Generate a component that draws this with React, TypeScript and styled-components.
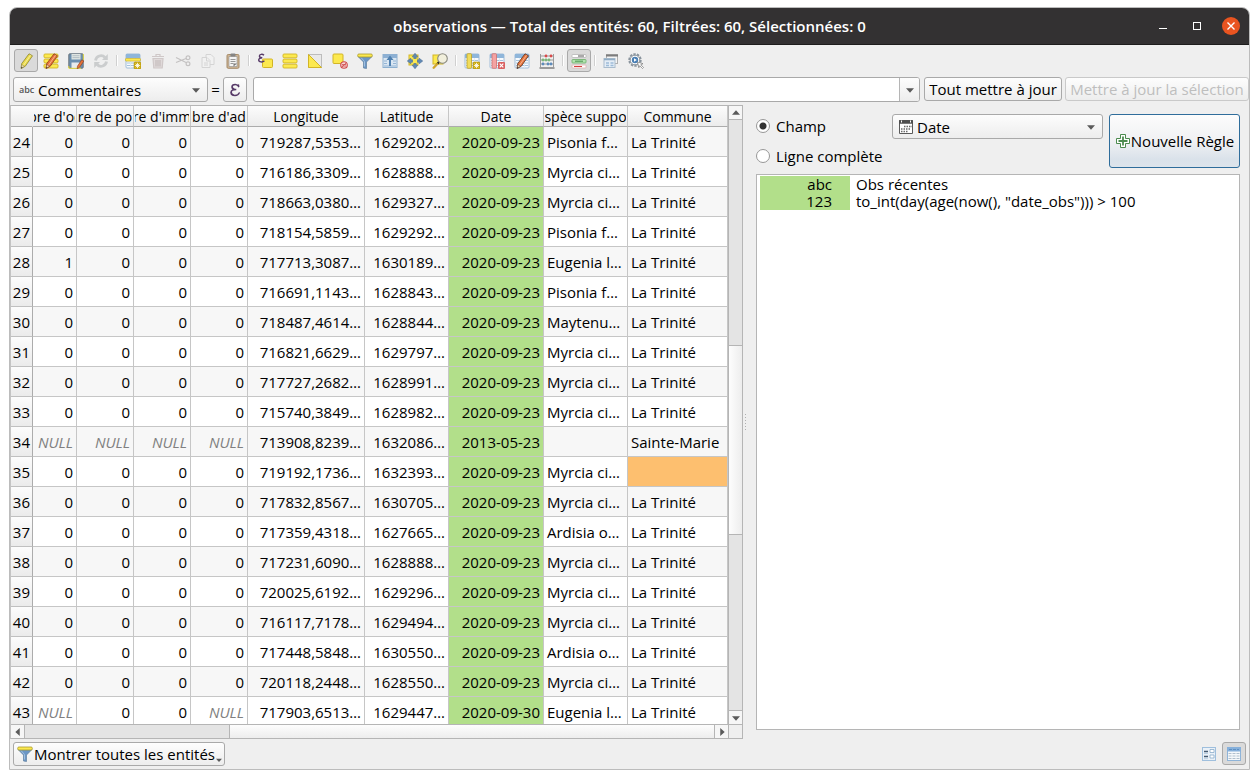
import React from "react";
import styled, { createGlobalStyle, css } from "styled-components";

const GlobalStyle = createGlobalStyle`
  *, *::before, *::after { box-sizing: border-box; }
  body {
    margin: 0;
    background: #fff;
    color: #000;
    font-family: "Open Sans", "Noto Sans", sans-serif;
    font-size: 15px;
    line-height: 20px;
  }
  button, input, select { font: inherit; color: inherit; margin: 0; }
`;

const raised = css`
  border: 1px solid #a9a9a9;
  border-radius: 3px;
  background: linear-gradient(#fdfdfd, #ededed);
`;

const Page = styled.div`
  height: 100vh;
  padding: 7px 9px 9px;
`;

const Window = styled.div`
  display: flex;
  flex-direction: column;
  height: 100%;
  border: 1px solid #bcbcbc;
  border-radius: 8px 8px 0 0;
  background: #efefef;
  overflow: hidden;
`;

const TitleBar = styled.header`
  display: grid;
  grid-template-columns: 96px minmax(0, 1fr) 96px;
  align-items: center;
  flex: none;
  height: 37px;
  background: #333132;
  border-bottom: 1px solid #1e1d1d;
  color: #fff;
`;

const Title = styled.h1`
  grid-column: 2;
  margin: 0;
  font-size: 15px;
  font-weight: 600;
  text-align: center;
  white-space: nowrap;
`;

const WindowButtons = styled.div`
  display: flex;
  align-items: center;
  justify-content: flex-end;
  gap: 16px;
  padding-right: 9px;
`;

const WindowButton = styled.button<{ $close?: boolean }>`
  display: flex;
  align-items: center;
  justify-content: center;
  flex: none;
  width: 18px;
  height: 18px;
  padding: 0;
  border: 0;
  border-radius: 50%;
  background: ${(p) => (p.$close ? "#e95420" : "transparent")};
`;

const Toolbar = styled.div`
  display: flex;
  gap: 1px;
  flex: none;
  padding: 4px 4px 5px;
`;

const ToolButton = styled.button<{ $pressed?: boolean }>`
  display: flex;
  align-items: center;
  justify-content: center;
  width: 24px;
  height: 23px;
  padding: 0;
  border: 1px solid ${(p) => (p.$pressed ? "#a9a9a9" : "transparent")};
  border-radius: 3px;
  background: ${(p) => (p.$pressed ? "#dadada" : "transparent")};
  svg { display: block; }
`;

const Separator = styled.span`
  width: 6px;
  margin: 6px 0;
  background: linear-gradient(#d0d0d0, #d0d0d0) 2px 0 / 1px 100% no-repeat,
    linear-gradient(#fff, #fff) 3px 0 / 1px 100% no-repeat;
`;

const FieldBar = styled.form`
  display: flex;
  align-items: flex-start;
  flex: none;
  padding: 0 0 3px 3px;
`;

const Equals = styled.span`
  width: 15px;
  line-height: 25px;
  text-align: center;
`;

const PushButton = styled.button<{ $width?: number }>`
  ${raised}
  height: 24px;
  min-width: ${(p) => p.$width ?? 24}px;
  padding: 0 2px;
  line-height: 20px;
  white-space: nowrap;
  & + & { margin-left: 3px; }
  &:disabled { color: #bebebe; border-color: #c9c9c9; }
`;

const ExpressionButton = styled.button`
  ${raised}
  display: flex;
  align-items: center;
  justify-content: center;
  width: 24px;
  height: 25px;
  margin-right: 6px;
  padding: 0;
`;

const SelectBox = styled.div<{ $width: number }>`
  ${raised}
  display: grid;
  grid-template-columns: 24px minmax(0, 1fr) 22px;
  align-items: center;
  width: ${(p) => p.$width}px;
  height: 25px;
  > * { grid-row: 1; }
`;

const SelectIcon = styled.span`
  display: flex;
  grid-column: 1;
  padding-left: 5px;
  pointer-events: none;
`;

const SelectArrow = styled.span`
  display: flex;
  justify-content: center;
  grid-column: 3;
  pointer-events: none;
`;

const TypeTag = styled.span`
  grid-column: 1;
  padding-left: 5px;
  color: #555;
  font-size: 9px;
  font-weight: 600;
  line-height: 20px;
`;

const Select = styled.select`
  grid-column: 1 / -1;
  width: 100%;
  height: 23px;
  padding: 0 22px 0 24px;
  border: 0;
  background: transparent;
  appearance: none;
  outline: 0;
`;

const ValueBox = styled.div`
  display: flex;
  flex: 1;
  height: 25px;
  margin-right: 4px;
  border: 1px solid #a9a9a9;
  border-radius: 3px;
  background: #fff;
  overflow: hidden;
`;

const ValueInput = styled.input`
  flex: 1;
  min-width: 0;
  border: 0;
  padding: 0 4px;
  background: transparent;
  outline: 0;
`;

const DropButton = styled.button`
  display: flex;
  align-items: center;
  justify-content: center;
  width: 20px;
  padding: 0;
  border: 0;
  border-left: 1px solid #b5b5b5;
  background: linear-gradient(#fdfdfd, #ededed);
`;

const Main = styled.main`
  display: grid;
  grid-template-columns: minmax(0, 733fr) 13px minmax(0, 493fr);
  flex: 1;
  min-height: 0;
`;

const TableFrame = styled.section`
  display: grid;
  grid-template-columns: minmax(0, 1fr) 14px;
  grid-template-rows: minmax(0, 1fr) 14px;
  border: 1px solid #b5b5b5;
  border-left-color: #c4c4c4;
  min-height: 0;
`;

const TableView = styled.div`
  overflow: hidden;
  background: #fff;
`;

const Table = styled.table`
  width: 100%;
  table-layout: fixed;
  border-collapse: separate;
  border-spacing: 0;
`;

const HeadCell = styled.th<{ $corner?: boolean }>`
  height: 21px;
  padding: 0 1px;
  border-right: 1px solid ${(p) => (p.$corner ? "transparent" : "#c6c6c6")};
  border-bottom: 1px solid #acacac;
  background: linear-gradient(#fcfcfc, #ebebeb) border-box;
  font-size: 14px;
  font-weight: 400;
  line-height: 22px;
`;

const HeadLabel = styled.span`
  display: flex;
  justify-content: center;
  height: 20px;
  overflow: hidden;
  white-space: nowrap;
`;

const RowHead = styled.th`
  height: 30px;
  padding: 1px 2px 0 0;
  border-right: 1px solid #acacac;
  border-bottom: 1px solid #c0c0c0;
  background: linear-gradient(#fcfcfc, #ebebeb);
  font-weight: 400;
  text-align: right;
`;

const Cell = styled.td<{ $left?: boolean; $fill?: string; $null?: boolean }>`
  height: 30px;
  padding: 0 3px;
  border-right: 1px solid #c6c6c6;
  border-bottom: 1px solid #c6c6c6;
  overflow: hidden;
  text-align: ${(p) => (p.$left ? "left" : "right")};
  white-space: nowrap;
  font-style: ${(p) => (p.$null ? "italic" : "normal")};
  color: ${(p) => (p.$null ? "#808080" : "#000")};
  background: ${(p) => p.$fill ?? "transparent"};
`;

const Row = styled.tr`
  background: #fff;
  &:nth-child(odd) { background: #f7f7f7; }
`;

const ScrollBar = styled.div<{ $vertical?: boolean }>`
  display: flex;
  flex-direction: ${(p) => (p.$vertical ? "column" : "row")};
  ${(p) => (p.$vertical ? "border-left" : "border-top")}: 1px solid #b5b5b5;
  background: #e4e4e4;
`;

const ScrollArrow = styled.button<{ $edge: "top" | "right" | "bottom" | "left" }>`
  display: flex;
  align-items: center;
  justify-content: center;
  flex: 0 0 14px;
  padding: 0;
  border: 0;
  border-${(p) => p.$edge}: 1px solid #b5b5b5;
  background: #f6f6f6;
`;

const Groove = styled.span<{ $grow: number }>`
  flex: ${(p) => p.$grow} 1 0;
`;

const Thumb = styled.span<{ $grow: number; $vertical?: boolean }>`
  flex: ${(p) => p.$grow} 1 0;
  ${(p) =>
    p.$vertical
      ? "border-top: 1px solid #b5b5b5; border-bottom: 1px solid #b5b5b5; background: linear-gradient(90deg, #fdfdfd, #ededed);"
      : "border-left: 1px solid #b5b5b5; background: linear-gradient(#fdfdfd, #ededed);"}
`;

const ScrollCorner = styled.span`
  border-top: 1px solid #b5b5b5;
  border-left: 1px solid #b5b5b5;
  background: #efefef;
`;

const Splitter = styled.div`
  display: flex;
  align-items: center;
  padding-left: 2px;
`;

const RulePanel = styled.aside`
  display: flex;
  flex-direction: column;
  gap: 6px;
  padding: 9px 9px 9px 0;
  min-height: 0;
`;

const RuleControls = styled.div`
  display: flex;
  align-items: flex-start;
  gap: 6px;
`;

const RadioGroup = styled.div`
  display: flex;
  flex-direction: column;
  gap: 6px;
  flex: 1;
`;

const RadioLabel = styled.label`
  display: flex;
  align-items: center;
  gap: 6px;
  height: 24px;
  white-space: nowrap;
`;

const Radio = styled.input`
  appearance: none;
  width: 14px;
  height: 14px;
  border: 1px solid #979797;
  border-radius: 50%;
  background: #fff;
  &:checked { background: radial-gradient(circle, #333 3px, #fff 4px); }
`;

const NewRule = styled.button`
  display: flex;
  align-items: center;
  justify-content: center;
  width: 131px;
  height: 54px;
  padding: 0;
  border: 1px solid #2f6d9b;
  border-radius: 3px;
  background: linear-gradient(#fcfcfc 0%, #f0f1f3 50%, #dae2ea 85%, #dde4eb);
  white-space: nowrap;
`;

const RuleList = styled.ul`
  flex: 1;
  margin: 0;
  padding: 1px 3px;
  border: 1px solid #b5b5b5;
  background: #fff;
  list-style: none;
`;

const Rule = styled.li`
  display: flex;
  gap: 6px;
  line-height: 17px;
`;

const RulePreview = styled.span`
  width: 90px;
  padding-right: 18px;
  background: #b2df8a;
  text-align: right;
  white-space: pre-line;
`;

const RuleText = styled.span`
  white-space: pre-line;
`;

const Footer = styled.footer`
  display: flex;
  align-items: flex-start;
  gap: 1px;
  flex: none;
  height: 30px;
  padding: 3px 3px 0;
`;

const FilterButton = styled.button`
  ${raised}
  display: flex;
  align-items: center;
  gap: 1px;
  min-width: 212px;
  height: 24px;
  margin-right: auto;
  padding: 0 2px 0 3px;
  white-space: nowrap;
`;

const MenuMark = styled.span`
  display: flex;
  align-items: flex-end;
  height: 18px;
  margin-left: auto;
`;

/* ---------- drawings ---------- */

const Icon = ({ children, size = 16 }: { children: React.ReactNode; size?: number }) => (
  <svg width={size} height={size} viewBox="0 0 16 16" fill="none" aria-hidden="true">
    {children}
  </svg>
);

const ARROWS = {
  down: "M0 2.500h9L4.500 7.500z",
  up: "M0 6.500h9L4.500 1.500z",
  left: "M6.500 0v9L1.500 4.500z",
  right: "M2.500 0v9L7.500 4.500z",
};

const Arrow = ({ dir = "down", size = 8 }: { dir?: keyof typeof ARROWS; size?: number }) => (
  <svg width={size} height={size} viewBox="0 0 9 9" aria-hidden="true">
    <path d={ARROWS[dir]} fill="#5a5a5a" />
  </svg>
);

const Pencil = ({ body, edge }: { body: string; edge: string }) => (
  <g>
    <path d="M11 .8l3.500 2L7.300 13.200 3.200 15.500l.4-4.700z" fill={body} stroke={edge} strokeWidth=".8" />
    <path d="M12.600 2.200L5.200 12.700" stroke="#fff" strokeOpacity=".5" strokeWidth=".9" />
    <path d="M3.600 11.400l2.900 1.900-3.300 2.200z" fill="#ead9b5" stroke={edge} strokeWidth=".5" />
    <path d="M3.400 13.700l1.300.9-1.500.9z" fill="#333" />
  </g>
);

const Bars = () => (
  <g fill="#fce94f" stroke="#d2b526" strokeWidth=".9">
    <rect x="1" y="1" width="14" height="3.800" rx="1" />
    <rect x="1" y="6.100" width="14" height="3.800" rx="1" />
    <rect x="1" y="11.200" width="14" height="3.800" rx="1" />
  </g>
);

const Grid = () => (
  <g>
    <rect x="1" y="1" width="14" height="14" rx="1" fill="#f7fafd" stroke="#a0bdd8" />
    <path d="M1 1h14v4H1z" fill="#8fb6da" />
    <path d="M2 7.500h12M2 10h12M2 12.500h12" stroke="#a8c3dc" strokeWidth="1.200" />
    <path d="M5.500 5v10M10.500 5v10" stroke="#dce8f3" strokeWidth=".8" />
  </g>
);

const Star = () => (
  <g>
    <rect x="9" y="9" width="7" height="7" rx="1" fill="#cfae14" stroke="#a58a08" strokeWidth=".5" />
    <path d="M12.500 9.800v5.400M9.900 12.500h5.200M10.700 10.700l3.600 3.600M14.300 10.700l-3.600 3.600" stroke="#fff" strokeWidth=".8" />
  </g>
);

const Funnel = () => (
  <g>
    <path d="M1 3.500l5.500 5.500v6l3 .5V9L15 3.500z" fill="#6b96c5" stroke="#5f7f9f" strokeWidth=".7" />
    <path d="M4 4.500l3.500 4v5" stroke="#a9c6e3" strokeWidth=".9" />
    <rect x=".7" y="1" width="14.600" height="3" rx="1.200" fill="#fce94f" stroke="#a99b2c" strokeWidth=".8" />
  </g>
);

const ICONS: Record<string, React.ReactNode> = {
  edit: <Pencil body="#ecdd4c" edge="#8b8435" />,
  multi: (<><Bars /><Pencil body="#e8743b" edge="#8d3d1a" /></>),
  save: (
    <>
      <rect x=".8" y=".8" width="14.400" height="14.400" rx="1" fill="#6b8fb0" stroke="#6c767e" />
      <rect x="3.500" y="1" width="9" height="5.500" fill="#dfe5e2" />
      <path d="M4.500 2.700h7M4.500 4.600h7" stroke="#a7b3bb" strokeWidth=".8" />
      <rect x="3.500" y="9.500" width="8" height="5.500" fill="#e7eaec" />
      <path d="M.8 13v2.300H13M15.300 1v6" stroke="#f2e539" strokeWidth=".9" />
      <path d="M13.800 6.800l2 1.300-4.300 6.300-2.300 1.300.3-2.600z" fill="#e8743b" stroke="#8d3d1a" strokeWidth=".6" />
    </>
  ),
  reload: (
    <g stroke="#cbcdce" strokeWidth="2.800">
      <path d="M2.500 7.500A5.500 5.500 0 0 1 12 4.500M13.500 8.500A5.500 5.500 0 0 1 4 11.500" />
      <path d="M14.800 1v6H9zM1.200 15V9H7z" fill="#cbcdce" stroke="none" />
    </g>
  ),
  addRow: (
    <>
      <Grid />
      <rect x=".5" y="5.500" width="15" height="2.600" rx=".8" fill="#fce94f" stroke="#c9ad2a" strokeWidth=".7" />
      <Star />
    </>
  ),
  trash: (
    <g stroke="#cfc8c8" strokeWidth="1.200">
      <path d="M2 3.500h12M6 3V1.500h4V3" />
      <path d="M3 5.500h10l-.8 9.500H3.800z" fill="#e0dada" />
      <path d="M6 7v6.500M8 7v6.500M10 7v6.500" stroke="#c4bcbc" />
    </g>
  ),
  cut: (
    <g stroke="#c4c2c2" strokeWidth="1.200">
      <path d="M1 4.500l10 5M1 9.500l10-4" />
      <circle cx="13" cy="4.800" r="1.900" />
      <circle cx="13" cy="10.800" r="1.900" />
    </g>
  ),
  copy: (
    <g fill="#f1f1f1" stroke="#d4d4d4">
      <path d="M6 1.500h5l3 3v7H6z" />
      <path d="M2 4.500h5l3 3v7H2z" />
      <path d="M6.500 5v3h3M4 10h4M4 12h4" />
    </g>
  ),
  paste: (
    <>
      <rect x="2" y="1.500" width="12" height="13.800" rx="1.200" fill="#cdb596" stroke="#a58a68" />
      <path d="M4 3.500h8v10H4z" fill="#f4f4f4" stroke="#8f8f8f" strokeWidth=".6" />
      <rect x="5.500" y=".5" width="5" height="3" rx=".8" fill="#858585" />
      <path d="M5.500 6.500h5M5.500 8.500h5M5.500 10.500h3" stroke="#8d8d8d" strokeWidth=".9" />
      <path d="M8.500 13.500v-3H12z" fill="#777" />
    </>
  ),
  expr: (
    <>
      <rect x="5.500" y="6" width="10" height="8.500" rx="1" fill="#fce94f" stroke="#d2b526" />
      <path d="M7 2.200C5.500.8 2.500 1 2.400 3c0 1.300 1.200 1.800 2.900 1.800C3.200 4.800 1.700 5.400 1.700 7c0 2.300 4 2.500 5.700.8" stroke="#573a68" strokeWidth="1.400" />
    </>
  ),
  epsilon: (
    <g stroke="#573a68" strokeLinecap="round">
      <path d="M11.600 4.600C11 2.900 9.600 2.500 8.300 2.500 6.300 2.500 5 3.500 5 5c0 1.700 1.500 2.500 4.300 2.500C6 7.500 4 8.500 4 10.500c0 2 1.700 3 4 3 2 0 3.700-.9 4.200-2.600" strokeWidth="1.500" />
      <path d="M11.600 3v1.600M4.400 10.500c0 1 .6 1.900 1.800 2.400M5.400 5c0 .9.500 1.500 1.500 2" strokeWidth="1.300" />
    </g>
  ),
  all: <Bars />,
  invert: (
    <>
      <rect x="1.500" y="1.500" width="13" height="13" fill="#e9e9e9" stroke="#bcbcbc" />
      <path d="M1.500 1.500v13h13z" fill="#fce94f" stroke="#d2b526" />
    </>
  ),
  deselect: (
    <>
      <rect x="1" y="1" width="10" height="9.500" rx="1" fill="#fce94f" stroke="#d2b526" />
      <circle cx="12" cy="12" r="3.300" fill="#f6d4d4" stroke="#cf4b4b" strokeWidth="1.100" />
      <path d="M9.800 14.200l4.400-4.400M10 11.500h4M10 13h4" stroke="#cf4b4b" strokeWidth=".8" />
    </>
  ),
  filter: <Funnel />,
  top: (
    <>
      <rect x="1" y="1.500" width="14" height="13" fill="#d9e6f2" stroke="#8db0d0" />
      <path d="M1 1.500h14v3.500H1z" fill="#8db0d3" />
      <path d="M2 8h3M11 8h3M2 10.500h3M11 10.500h3M2 13h12" stroke="#94b4d4" />
      <path d="M8 2.500L4.500 7H7v6h2V7h2.500z" fill="#4f80b0" />
    </>
  ),
  pan: (
    <>
      <rect x="2" y="2" width="9" height="10" fill="#fce94f" stroke="#d2b526" />
      <g fill="#6089b5" stroke="#4a6f97" strokeWidth=".6">
        <path d="M8 .3l2.800 3.500H9.200v1.700H6.800V3.800H5.200zM8 15.700l2.800-3.500H9.200v-1.700H6.800v1.700H5.200zM.3 8l3.500-2.800v1.600h1.700v2.400H3.800v1.600zM15.700 8l-3.500-2.800v1.600h-1.700v2.400h1.700v1.600z" />
      </g>
    </>
  ),
  zoom: (
    <>
      <rect x="1" y="2" width="10" height="9" fill="#fce94f" stroke="#d2b526" />
      <circle cx="10.500" cy="5.500" r="4.800" fill="#f1efdc" stroke="#8a8a80" strokeWidth="1.100" />
      <path d="M6.800 9.300l-1.800 1.900" stroke="#222" strokeWidth="2" />
      <path d="M5 11.200l-3.300 3.500" stroke="#d0a52a" strokeWidth="2.400" strokeLinecap="round" />
    </>
  ),
  newField: (
    <>
      <Grid />
      <rect x="3" y=".7" width="4.500" height="14.600" rx=".8" fill="#f0dc5c" stroke="#bfa223" strokeWidth=".8" />
      <Star />
    </>
  ),
  delField: (
    <>
      <Grid />
      <rect x="3" y=".7" width="4.500" height="14.600" rx=".8" fill="#f3a3a3" stroke="#d07070" strokeWidth=".8" />
      <rect x="9" y="9" width="7" height="7" rx="1" fill="#d96060" />
      <path d="M10.700 10.700l3.600 3.600M14.300 10.700l-3.600 3.600" stroke="#fff" strokeWidth="1.200" />
    </>
  ),
  editField: (<><Grid /><Pencil body="#e8743b" edge="#5c3422" /></>),
  abacus: (
    <>
      <path d="M1.500 1v13M14.500 1v13M1.500 3h13M1.500 7h13M1.500 11h13" stroke="#9b9b9b" />
      <path d="M.5 15h15" stroke="#7e7e7e" strokeWidth="1.600" />
      <g fill="#d84a4a"><circle cx="7" cy="3" r="1.400" /><circle cx="12" cy="3" r="1.400" /></g>
      <g fill="#7ab87a"><circle cx="4" cy="7" r="1.400" /><circle cx="7" cy="7" r="1.400" /><circle cx="10" cy="7" r="1.400" /></g>
      <g fill="#5c8bbb"><circle cx="4" cy="11" r="1.400" /><circle cx="9" cy="11" r="1.400" /><circle cx="12" cy="11" r="1.400" /></g>
    </>
  ),
  conditional: (
    <>
      <rect x="1" y="1.500" width="14" height="3" rx=".8" fill="#fff" stroke="#b5b5b5" strokeWidth=".8" />
      <path d="M7 3h6" stroke="#555" />
      <rect x="1" y="6.500" width="14" height="3.500" rx=".8" fill="#b3e3b0" stroke="#69ae68" strokeWidth=".8" />
      <path d="M4 8.200h8" stroke="#4a9450" />
      <rect x="1" y="12" width="14" height="3" rx=".8" fill="#fff" stroke="#e0b0b0" strokeWidth=".8" />
      <path d="M3 13.500h8" stroke="#d63c3c" />
    </>
  ),
  dock: (
    <>
      <rect x="3.500" y="1.500" width="11" height="9" fill="#f4f4f4" stroke="#b0b0b0" />
      <path d="M3 2.500h12" stroke="#7c7c7c" strokeWidth="2" />
      <rect x="1" y="5.500" width="11" height="9" fill="#e4edf6" stroke="#a9bccd" />
      <path d="M1 6.500h11" stroke="#8fabc4" strokeWidth="1.600" />
      <path d="M3 10h3M7.500 10h3M3 12.500h3M7.500 12.500h3" stroke="#9dbbd8" strokeWidth="1.400" />
    </>
  ),
  action: (
    <>
      <circle cx="7" cy="7" r="5.700" stroke="#8a949d" strokeWidth="2" strokeDasharray="2.400 1.100" />
      <circle cx="7" cy="7" r="4.800" fill="#fff" stroke="#8a949d" />
      <circle cx="7" cy="7" r="3.200" fill="#4a7fb4" />
      <path d="M6 5.300l2.800 1.700L6 8.700z" fill="#fff" />
      <path d="M9.500 9l5.500 1.700-2.200 1 2.700 2.800-1 1-2.700-2.800-1 2z" fill="#fff" stroke="#777" strokeWidth=".7" />
    </>
  ),
  form: (
    <>
      <rect x="1.500" y="1.500" width="13" height="13" fill="#eaf1f8" stroke="#9fbfdd" />
      <path d="M3 5.500h4M3 10.500h4" stroke="#445a70" strokeWidth="1.400" />
      <path d="M9 3.500h4v3H9zM9 9h4v3H9z" fill="#fff" stroke="#8bacc9" strokeWidth=".8" />
      <path d="M3 7.500h4M3 12.700h4" stroke="#b9cfe3" />
    </>
  ),
  table: (
    <>
      <rect x="1.500" y="1.500" width="13" height="13" fill="#f5f8fb" stroke="#8fb4d8" />
      <path d="M1 1h14v4.500H1z" fill="#86b0db" />
      <path d="M3 3.500h3M7 3.500h3M11 3.500h2" stroke="#5d8fc2" />
      <path d="M2.500 7.500h3M6.500 7.500h3M10.500 7.500h3M2.500 10h3M6.500 10h3M10.500 10h3M2.500 12.500h3M6.500 12.500h3M10.500 12.500h3" stroke="#b0bfcd" strokeWidth="1.100" />
    </>
  ),
  calendar: (
    <>
      <path d="M1.500 1.500h13v13h-13z" fill="#fff" stroke="#5a5a5a" />
      <path d="M1 3h14" stroke="#4f4f4f" strokeWidth="3.400" />
      <path d="M3.500 1.500v2M12.500 1.500v2" stroke="#fff" />
      <path d="M6 7.500h8M3 10h10M3 12.500h7" stroke="#6a6a6a" strokeWidth="1.500" strokeDasharray="1.500 1" />
    </>
  ),
  plus: (
    <>
      <path d="M5.500 1.500h5v4h4v5h-4v4h-5v-4h-4v-5h4z" fill="#fff" stroke="#4b8b4e" />
      <path d="M8 3.500v9M3.500 8h9" stroke="#4b8b4e" strokeWidth="1.800" />
    </>
  ),
};

/* ---------- data ---------- */

type Tool = [icon: string, label: string, pressed?: boolean] | null;

const TOOLS: Tool[] = [
  ["edit", "Basculer en mode édition", true],
  ["multi", "Édition multiple"],
  ["save", "Enregistrer"],
  ["reload", "Recharger"],
  null,
  ["addRow", "Ajouter une entité"],
  ["trash", "Supprimer"],
  ["cut", "Couper"],
  ["copy", "Copier"],
  ["paste", "Coller"],
  null,
  ["expr", "Sélectionner par expression"],
  ["all", "Tout sélectionner"],
  ["invert", "Inverser la sélection"],
  ["deselect", "Tout désélectionner"],
  ["filter", "Filtrer"],
  ["top", "Sélection en haut"],
  ["pan", "Centrer sur la sélection"],
  ["zoom", "Zoomer sur la sélection"],
  null,
  ["newField", "Nouveau champ"],
  ["delField", "Supprimer le champ"],
  ["editField", "Modifier le champ"],
  ["abacus", "Calculatrice de champ"],
  null,
  ["conditional", "Formatage conditionnel", true],
  null,
  ["dock", "Ancrer la table"],
  ["action", "Actions"],
];

const COLUMNS: [label: string, width?: number][] = [
  ["bre d'oc", 44],
  ["re de po", 57],
  ["re d'imm", 57],
  ["bre d'ad", 57],
  ["Longitude", 117],
  ["Latitude", 84],
  ["Date", 95],
  ["spèce suppo", 84],
  ["Commune"],
];

const N = "NULL";
const D = "2020-09-23";
const T = "La Trinité";
const P = "Pisonia f…";
const M = "Myrcia ci…";

const ROWS: string[][] = [
  ["0", "0", "0", "0", "719287,5353…", "1629202…", D, P, T],
  ["0", "0", "0", "0", "716186,3309…", "1628888…", D, M, T],
  ["0", "0", "0", "0", "718663,0380…", "1629327…", D, M, T],
  ["0", "0", "0", "0", "718154,5859…", "1629292…", D, P, T],
  ["1", "0", "0", "0", "717713,3087…", "1630189…", D, "Eugenia l…", T],
  ["0", "0", "0", "0", "716691,1143…", "1628843…", D, P, T],
  ["0", "0", "0", "0", "718487,4614…", "1628844…", D, "Maytenu…", T],
  ["0", "0", "0", "0", "716821,6629…", "1629797…", D, M, T],
  ["0", "0", "0", "0", "717727,2682…", "1628991…", D, M, T],
  ["0", "0", "0", "0", "715740,3849…", "1628982…", D, M, T],
  [N, N, N, N, "713908,8239…", "1632086…", "2013-05-23", "", "Sainte-Marie"],
  ["0", "0", "0", "0", "719192,1736…", "1632393…", D, M, ""],
  ["0", "0", "0", "0", "717832,8567…", "1630705…", D, M, T],
  ["0", "0", "0", "0", "717359,4318…", "1627665…", D, "Ardisia o…", T],
  ["0", "0", "0", "0", "717231,6090…", "1628888…", D, M, T],
  ["0", "0", "0", "0", "720025,6192…", "1629296…", D, M, T],
  ["0", "0", "0", "0", "716117,7178…", "1629494…", D, M, T],
  ["0", "0", "0", "0", "717448,5848…", "1630550…", D, "Ardisia o…", T],
  ["0", "0", "0", "0", "720118,2448…", "1628550…", D, M, T],
  [N, "0", "0", N, "717903,6513…", "1629447…", "2020-09-30", "Eugenia l…", T],
];

const fillFor = (col: number, value: string) => {
  if (col === 6) return "#b2df8a";
  if (col === 8 && value === "") return "#fdbf6f";
  return undefined;
};

/* ---------- page ---------- */

export default function App() {
  return (
    <>
      <GlobalStyle />
      <Page>
        <Window>
          <TitleBar>
            <Title>observations — Total des entités: 60, Filtrées: 60, Sélectionnées: 0</Title>
            <WindowButtons>
              <WindowButton aria-label="Réduire">
                <Icon><path d="M4 10.500h8" stroke="#fff" /></Icon>
              </WindowButton>
              <WindowButton aria-label="Agrandir">
                <Icon><rect x="4.500" y="4.500" width="7" height="7" stroke="#fff" /></Icon>
              </WindowButton>
              <WindowButton $close aria-label="Fermer">
                <Icon><path d="M4.500 4.500l7 7M11.500 4.500l-7 7" stroke="#fff" strokeWidth="1.400" /></Icon>
              </WindowButton>
            </WindowButtons>
          </TitleBar>

          <Toolbar role="toolbar">
            {TOOLS.map((tool, i) =>
              tool ? (
                <ToolButton key={i} $pressed={tool[2]} aria-label={tool[1]}>
                  <Icon>{ICONS[tool[0]]}</Icon>
                </ToolButton>
              ) : (
                <Separator key={i} />
              )
            )}
          </Toolbar>

          <FieldBar onSubmit={(e) => e.preventDefault()}>
            <SelectBox $width={195}>
              <TypeTag>abc</TypeTag>
              <Select aria-label="Champ à mettre à jour">
                <option>Commentaires</option>
              </Select>
              <SelectArrow><Arrow /></SelectArrow>
            </SelectBox>
            <Equals>=</Equals>
            <ExpressionButton type="button" aria-label="Expression">
              <Icon>{ICONS.epsilon}</Icon>
            </ExpressionButton>
            <ValueBox>
              <ValueInput aria-label="Valeur" />
              <DropButton type="button" aria-label="Historique"><Arrow /></DropButton>
            </ValueBox>
            <PushButton type="button" $width={138}>Tout mettre à jour</PushButton>
            <PushButton type="button" $width={184} disabled>Mettre à jour la sélection</PushButton>
          </FieldBar>

          <Main>
            <TableFrame>
              <TableView>
                <Table>
                  <colgroup>
                    <col width={22} />
                    {COLUMNS.map(([label, width]) => <col key={label} width={width} />)}
                  </colgroup>
                  <thead>
                    <tr>
                      <HeadCell $corner />
                      {COLUMNS.map(([label]) => (
                        <HeadCell key={label} scope="col"><HeadLabel>{label}</HeadLabel></HeadCell>
                      ))}
                    </tr>
                  </thead>
                  <tbody>
                    {ROWS.map((row, r) => (
                      <Row key={r}>
                        <RowHead scope="row">{24 + r}</RowHead>
                        {row.map((value, c) => (
                          <Cell key={c} $left={c > 6} $null={value === N} $fill={fillFor(c, value)}>
                            {value}
                          </Cell>
                        ))}
                      </Row>
                    ))}
                  </tbody>
                </Table>
              </TableView>
              <ScrollBar $vertical>
                <ScrollArrow $edge="bottom" aria-label="Monter"><Arrow dir="up" /></ScrollArrow>
                <Groove $grow={226} />
                <Thumb $vertical $grow={188} />
                <Groove $grow={176} />
                <ScrollArrow $edge="top" aria-label="Descendre"><Arrow dir="down" /></ScrollArrow>
              </ScrollBar>
              <ScrollBar>
                <ScrollArrow $edge="right" aria-label="Gauche"><Arrow dir="left" /></ScrollArrow>
                <Groove $grow={205} />
                <Thumb $grow={485} />
                <ScrollArrow $edge="left" aria-label="Droite"><Arrow dir="right" /></ScrollArrow>
              </ScrollBar>
              <ScrollCorner />
            </TableFrame>

            <Splitter>
              <svg width="2" height="17" aria-hidden="true">
                <path d="M.5 0v17" stroke="#b0b0b0" strokeDasharray="1 2" />
              </svg>
            </Splitter>

            <RulePanel>
              <RuleControls>
                <RadioGroup>
                  <RadioLabel><Radio type="radio" name="scope" defaultChecked />Champ</RadioLabel>
                  <RadioLabel><Radio type="radio" name="scope" />Ligne complète</RadioLabel>
                </RadioGroup>
                <SelectBox $width={211}>
                  <SelectIcon><Icon>{ICONS.calendar}</Icon></SelectIcon>
                  <Select aria-label="Champ de la règle">
                    <option>Date</option>
                  </Select>
                  <SelectArrow><Arrow /></SelectArrow>
                </SelectBox>
                <NewRule><Icon>{ICONS.plus}</Icon>Nouvelle Règle</NewRule>
              </RuleControls>
              <RuleList>
                <Rule>
                  <RulePreview>{"abc\n123"}</RulePreview>
                  <RuleText>{'Obs récentes\nto_int(day(age(now(), "date_obs"))) > 100'}</RuleText>
                </Rule>
              </RuleList>
            </RulePanel>
          </Main>

          <Footer>
            <FilterButton>
              <Icon><Funnel /></Icon>
              Montrer toutes les entités
              <MenuMark><Arrow size={6} /></MenuMark>
            </FilterButton>
            <ToolButton aria-label="Vue formulaire"><Icon>{ICONS.form}</Icon></ToolButton>
            <ToolButton $pressed aria-label="Vue table"><Icon>{ICONS.table}</Icon></ToolButton>
          </Footer>
        </Window>
      </Page>
    </>
  );
}
